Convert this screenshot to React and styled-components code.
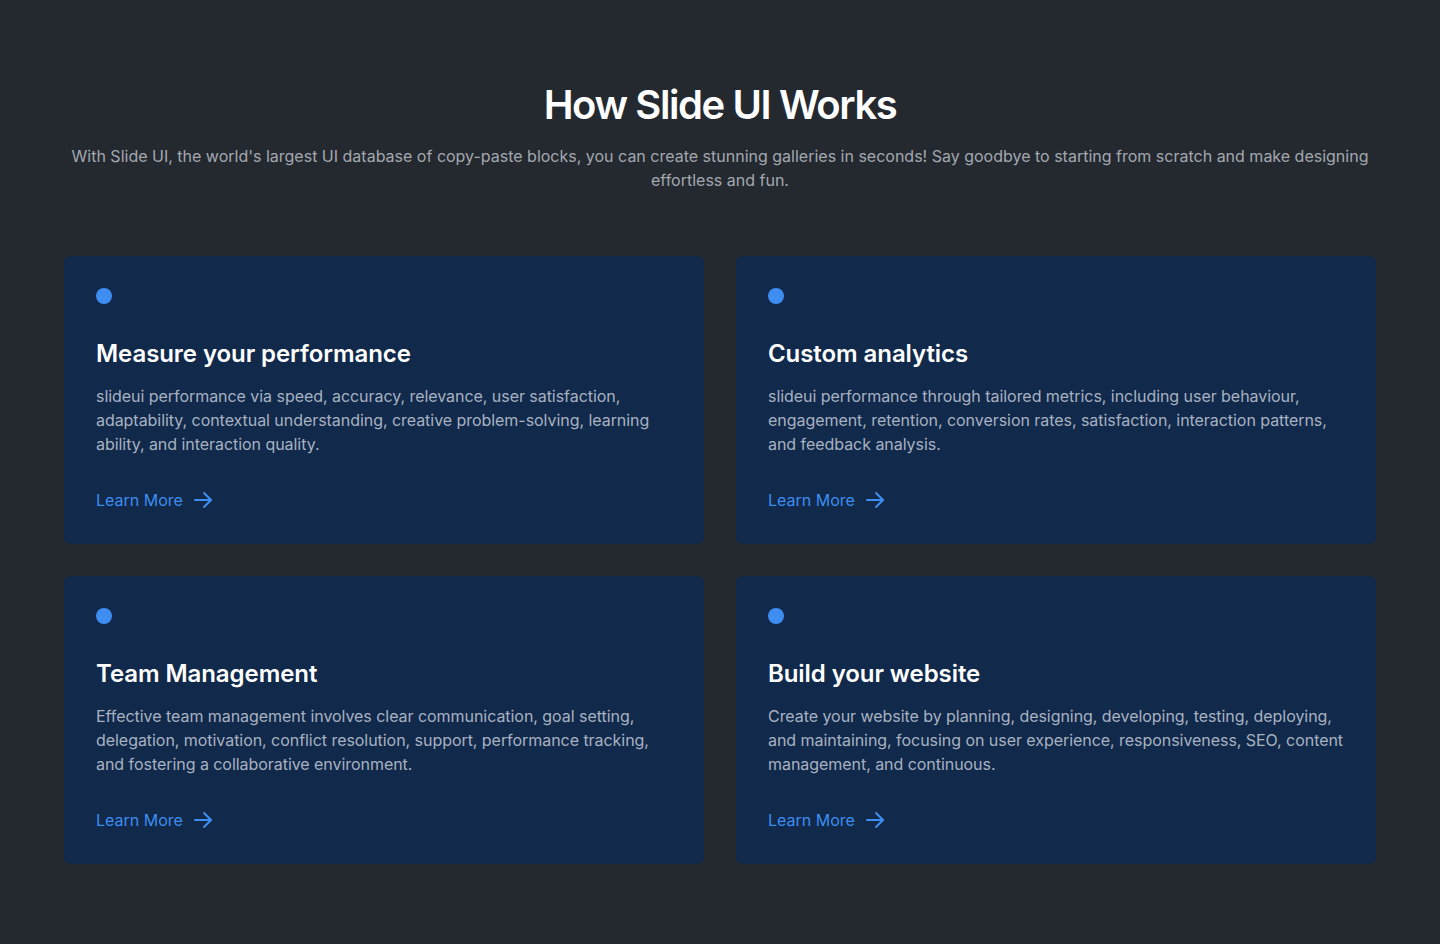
import React from "react";
import styled, { createGlobalStyle } from "styled-components";

const GlobalStyle = createGlobalStyle`
  body {
    margin: 0;
    background: #23292f;
    font-family: Inter, "Noto Sans", sans-serif;
  }
`;

const steps = [
  {
    title: "Measure your performance",
    text: "slideui performance via speed, accuracy, relevance, user satisfaction, adaptability, contextual understanding, creative problem-solving, learning ability, and interaction quality.",
  },
  {
    title: "Custom analytics",
    text: "slideui performance through tailored metrics, including user behaviour, engagement, retention, conversion rates, satisfaction, interaction patterns, and feedback analysis.",
  },
  {
    title: "Team Management",
    text: "Effective team management involves clear communication, goal setting, delegation, motivation, conflict resolution, support, performance tracking, and fostering a collaborative environment.",
  },
  {
    title: "Build your website",
    text: "Create your website by planning, designing, developing, testing, deploying, and maintaining, focusing on user experience, responsiveness, SEO, content management, and continuous.",
  },
];

const Arrow = () => (
  <svg width="24" height="24" viewBox="0 0 24 24" fill="none" stroke="currentColor" strokeWidth="2" strokeLinecap="round" strokeLinejoin="round">
    <path d="M4 12h16" />
    <path d="M13 5l7 7-7 7" />
  </svg>
);

const App = () => {
  return (
    <Section>
      <GlobalStyle />
      <Header>
        <h1>How Slide UI Works</h1>
        <p>
          With Slide UI, the world's largest UI database of copy-paste blocks, you can create stunning galleries in
          seconds! Say goodbye to starting from scratch and make designing effortless and fun.
        </p>
      </Header>
      <Grid>
        {steps.map((s) => (
          <Card key={s.title}>
            <Dot />
            <h3>{s.title}</h3>
            <p>{s.text}</p>
            <LearnMore href="#">
              Learn More <Arrow />
            </LearnMore>
          </Card>
        ))}
      </Grid>
    </Section>
  );
};

const Section = styled.section`
  box-sizing: border-box;
  min-height: 944px;
  padding: 81px 64px 80px;
`;

const Header = styled.div`
  text-align: center;
  margin-bottom: 64px;

  h1 {
    margin: 0;
    font-size: 40px;
    line-height: 48px;
    font-weight: 600;
    letter-spacing: -0.035em;
    color: #ffffff;
  }

  p {
    margin: 15px 0 0;
    font-size: 16px;
    line-height: 24px;
    color: #a3a8b0;
  }
`;

const Grid = styled.div`
  display: grid;
  grid-template-columns: 1fr 1fr;
  gap: 32px;
`;

const Card = styled.div`
  box-sizing: border-box;
  height: 288px;
  padding: 32px;
  border-radius: 6px;
  background: #11294a;
  display: flex;
  flex-direction: column;
  align-items: flex-start;

  h3 {
    margin: 34px 0 0;
    font-size: 24px;
    line-height: 32px;
    font-weight: 600;
    letter-spacing: -0.003em;
    color: #ffffff;
  }

  p {
    margin: 14px 0 0;
    font-size: 16px;
    line-height: 24px;
    letter-spacing: -0.003em;
    color: #a8b2c2;
  }
`;

const Dot = styled.span`
  display: block;
  width: 16px;
  height: 16px;
  border-radius: 50%;
  background: #3d8ef0;
`;

const LearnMore = styled.a`
  margin-top: auto;
  display: inline-flex;
  align-items: center;
  gap: 8px;
  font-size: 16px;
  line-height: 24px;
  color: #3d8ef0;
  text-decoration: none;
`;

export default App;
